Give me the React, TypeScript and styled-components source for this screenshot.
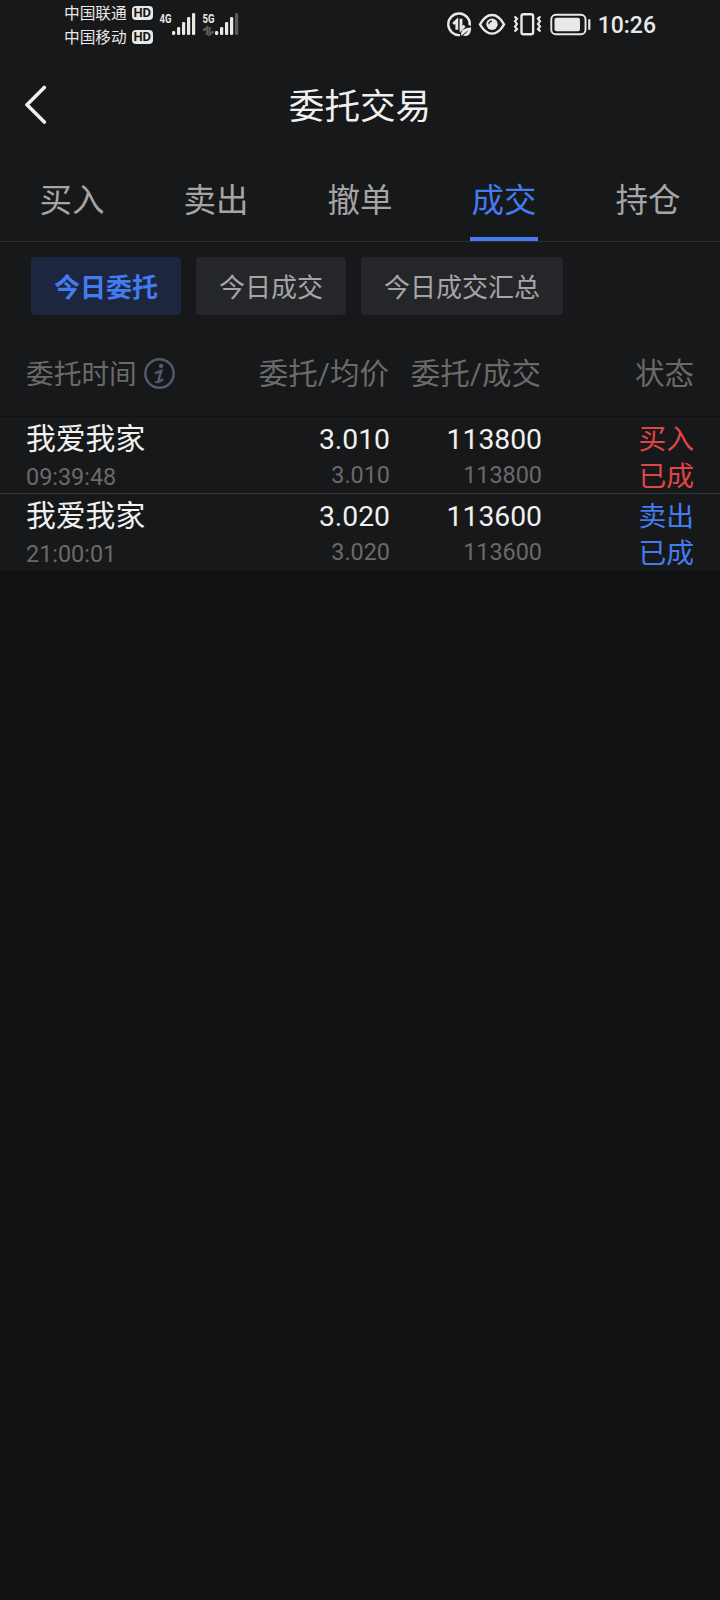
import React, { useState } from 'react';
import styled, { createGlobalStyle } from 'styled-components';

const GlobalStyle = createGlobalStyle`
  * {
    box-sizing: border-box;
  }
  body {
    margin: 0;
    background: #101113;
    font-family: Roboto, 'Noto Sans CJK SC', sans-serif;
  }
`;

const Page = styled.div`
  display: flex;
  flex-direction: column;
  width: 720px;
  min-height: 1600px;
  background: #101113;
`;

const Panel = styled.div`
  display: flex;
  flex-direction: column;
  background: #17181a;
`;

const StatusBar = styled.div`
  display: flex;
  justify-content: space-between;
  height: 50px;
  padding: 0 64px 0 64px;
  color: #e8e8e8;
`;

const StatusLeft = styled.div`
  display: flex;
`;

const StatusRight = styled.div`
  display: flex;
  align-items: center;
  height: 50px;
`;

const Carriers = styled.div`
  display: flex;
  flex-direction: column;
  padding-top: 1px;
  width: 95px;
`;

const Carrier = styled.div`
  display: flex;
  align-items: center;
  gap: 5px;
  height: 24px;
  font-size: 15.7px;
  line-height: 24px;
`;

const CarrierName = styled.span`
  padding-top: 1px;
`;

const HdBadge = styled.span`
  display: flex;
  align-items: center;
  justify-content: center;
  width: 21px;
  height: 14px;
  border-radius: 4px;
  background: #e8e8e8;
  color: #17181a;
  font-size: 13px;
  font-weight: 700;
  line-height: 14px;
`;

const Clock = styled.span`
  margin-left: 7px;
  padding-top: 1px;
  font-size: 23px;
  font-weight: 500;
  line-height: 49px;
`;

const Header = styled.div`
  display: grid;
  grid-template-columns: 80px 1fr 80px;
  align-items: center;
  height: 110px;
`;

const BackButton = styled.button`
  display: flex;
  align-items: center;
  height: 60px;
  padding: 0 0 0 22px;
  border: none;
  background: none;
  color: #f0f0f0;
`;

const Title = styled.div`
  padding-top: 4px;
  color: #f0f0f0;
  font-size: 35.6px;
  line-height: 52px;
  text-align: center;
`;

const Tabs = styled.div`
  display: grid;
  grid-template-columns: repeat(5, 144px);
  height: 82px;
  border-bottom: 1px solid #2b2c2e;
`;

const Tab = styled.button<{ $active: boolean }>`
  justify-self: center;
  width: 68px;
  height: 81px;
  padding: 4px 0 0;
  border: none;
  border-bottom: 4px solid ${({ $active }) => ($active ? '#437cf0' : 'transparent')};
  background: none;
  color: ${({ $active }) => ($active ? '#437cf0' : '#a5a5a5')};
  font-family: inherit;
  font-size: 32.5px;
  line-height: 48px;
  white-space: nowrap;
`;

const Chips = styled.div`
  display: flex;
  gap: 15px;
  height: 89px;
  padding: 15px 31px 0;
  border-bottom: 1px solid #1b1c1f;
`;

const Chip = styled.button<{ $active: boolean }>`
  height: 58px;
  padding: 3px 23px 0;
  border: none;
  border-radius: 4px;
  background: ${({ $active }) => ($active ? '#1d263f' : '#25262a')};
  color: ${({ $active }) => ($active ? '#437cf0' : '#a5a5a5')};
  font-family: inherit;
  font-size: 26px;
  font-weight: ${({ $active }) => ($active ? 700 : 400)};
  line-height: 40px;
`;

const TableHead = styled.div`
  display: grid;
  grid-template-columns: 200px 163px 152px 153px;
  align-items: center;
  height: 86px;
  padding: 0 26px;
  border-bottom: 1px solid #0f1012;
  color: #6a6a6a;
  font-size: 29.5px;
  line-height: 44px;
`;

const TimeHead = styled.div`
  display: flex;
  align-items: center;
  gap: 7px;
  font-size: 27.7px;
`;

const TimeLabel = styled.span`
  padding-top: 2px;
`;

const HeadCell = styled.div`
  padding-top: 1px;
  text-align: right;
  white-space: nowrap;
`;

const Row = styled.div`
  display: grid;
  grid-template-columns: 200px 164px 152px 152px;
  height: 76px;
  padding: 0 26px;
  & + & {
    height: 77px;
    border-top: 1px solid #343537;
  }
`;

const NameCell = styled.div`
  display: flex;
  flex-direction: column;
`;

const Name = styled.div`
  color: #f0f0f0;
  font-size: 29.8px;
  line-height: 44px;
`;

const Time = styled.div`
  color: #6a6a6a;
  font-size: 23.4px;
  line-height: 32px;
`;

const NumberCell = styled.div`
  display: flex;
  flex-direction: column;
  padding-top: 1px;
  text-align: right;
`;

const Main = styled.div`
  color: #f0f0f0;
  font-size: 28.3px;
  line-height: 44px;
`;

const Sub = styled.div`
  color: #6a6a6a;
  font-size: 23.4px;
  line-height: 26px;
`;

const StateCell = styled.div<{ $side: 'buy' | 'sell' }>`
  color: ${({ $side }) => ($side === 'buy' ? '#e04547' : '#437cf0')};
  font-size: 27.8px;
  line-height: 37px;
  padding-top: 4px;
  text-align: right;
`;

type Order = {
  name: string;
  time: string;
  price: string;
  avgPrice: string;
  amount: string;
  dealAmount: string;
  side: 'buy' | 'sell';
  state: string;
};

const tabs = ['买入', '卖出', '撤单', '成交', '持仓'];
const chips = ['今日委托', '今日成交', '今日成交汇总'];

const orders: Order[] = [
  {
    name: '我爱我家',
    time: '09:39:48',
    price: '3.010',
    avgPrice: '3.010',
    amount: '113800',
    dealAmount: '113800',
    side: 'buy',
    state: '已成',
  },
  {
    name: '我爱我家',
    time: '21:00:01',
    price: '3.020',
    avgPrice: '3.020',
    amount: '113600',
    dealAmount: '113600',
    side: 'sell',
    state: '已成',
  },
];

// bar tops, left to right, all standing on y = 35
const barTops = [31, 27, 22, 17, 13];

function Signal({ label, weak }: { label: string; weak?: boolean }) {
  return (
    <svg width={weak ? 40 : 43} height="50" fill="#e8e8e8">
      <text
        x="0.5"
        y="22.5"
        fontFamily="Roboto"
        fontSize="12.8"
        fontWeight="700"
        textLength="12"
        lengthAdjust="spacingAndGlyphs"
      >
        {label}
      </text>
      {weak && (
        <path d="M1 30.5L5 27.5V35M7.500 27V34.500L11.500 31.500" fill="none" stroke="#58595b" strokeWidth="2.2" />
      )}
      {barTops.map((top, i) => (
        <rect
          key={top}
          x={13 + i * 5}
          y={top}
          width="3.2"
          height={35 - top}
          rx="1.3"
          fill={weak && i === 4 ? '#58595b' : '#e8e8e8'}
        />
      ))}
    </svg>
  );
}

function StatusIcons() {
  return (
    <svg width="145" height="50" fill="none" stroke="#e8e8e8" strokeWidth="2.4">
      {/* data saver */}
      <path d="M23.8 25.5A10.8 10.8 0 1 0 14 35.1" />
      <path d="M7.2 24L10.8 20.600V29.800" strokeWidth="2.8" />
      <path d="M15 18.800V29.200L18.600 25.800" strokeWidth="2.8" />
      <path d="M15.500 36C14 30.500 17.500 28 25.200 27.600C25 34 22 37.500 17.500 35.500Z" fill="#e8e8e8" stroke="none" />
      <path d="M15.300 36.500L21.500 31.200" stroke="#17181a" strokeWidth="1" />
      {/* eye comfort */}
      <path d="M34 24.300C37.500 18 42 15 46 15S54.500 18 58 24.300C54.500 30.600 50 33.600 46 33.600S37.500 30.600 34 24.300Z" />
      <circle cx="46" cy="24.300" r="5.700" fill="#e8e8e8" stroke="none" />
      <path d="M42.800 24.300A3.200 3.200 0 0 1 46 21.100" stroke="#17181a" strokeWidth="1.200" />
      {/* vibrate */}
      <rect x="75.500" y="14.200" width="11.600" height="20" rx="2" />
      <path d="M68.500 16.500L71 18.700L69 21.300L71 23.900L69 26.500L71 29.100L68.500 31.500" strokeWidth="2.200" />
      <path d="M94.500 16.500L92 18.700L94 21.300L92 23.900L94 26.500L92 29.100L94.500 31.500" strokeWidth="2.200" />
      {/* battery */}
      <rect x="105.300" y="14.800" width="34.200" height="19.400" rx="4.500" strokeWidth="1.900" />
      <rect x="108.500" y="17.800" width="25.500" height="13.500" rx="2" fill="#e8e8e8" stroke="none" />
      <path d="M143.300 20V29" strokeWidth="2.200" strokeLinecap="round" />
    </svg>
  );
}

function InfoIcon() {
  return (
    <svg width="31" height="31" viewBox="0 0 31 31" fill="none" stroke="#535a6d" strokeWidth="2.4">
      <circle cx="15.500" cy="15.500" r="14.200" />
      <circle cx="17" cy="8" r="2.200" fill="#535a6d" stroke="none" />
      <path d="M11 15.200C13.500 14.300 15.500 13.300 17.400 12.800L14.600 21.500C13.800 24.300 15.500 24 19 21" />
      <path d="M10.800 24.200H15.500" strokeWidth="1.800" />
    </svg>
  );
}

function App() {
  const [tab, setTab] = useState<string>('成交');
  const [chip, setChip] = useState<string>('今日委托');

  return (
    <Page>
      <GlobalStyle />
      <Panel>
        <StatusBar>
          <StatusLeft>
            <Carriers>
              <Carrier>
                <CarrierName>中国联通</CarrierName>
                <HdBadge>HD</HdBadge>
              </Carrier>
              <Carrier>
                <CarrierName>中国移动</CarrierName>
                <HdBadge>HD</HdBadge>
              </Carrier>
            </Carriers>
            <Signal label="4G" />
            <Signal label="5G" weak />
          </StatusLeft>
          <StatusRight>
            <StatusIcons />
            <Clock>10:26</Clock>
          </StatusRight>
        </StatusBar>
        <Header>
          <BackButton>
            <svg width="26" height="40" fill="none" stroke="currentColor" strokeWidth="3.6">
              <path d="M22.300 2.500L5 19.800L22.300 37" strokeLinecap="round" strokeLinejoin="round" />
            </svg>
          </BackButton>
          <Title>委托交易</Title>
        </Header>
        <Tabs>
          {tabs.map((item) => (
            <Tab key={item} $active={item === tab} onClick={() => setTab(item)}>
              {item}
            </Tab>
          ))}
        </Tabs>
        <Chips>
          {chips.map((item) => (
            <Chip key={item} $active={item === chip} onClick={() => setChip(item)}>
              {item}
            </Chip>
          ))}
        </Chips>
        <TableHead>
          <TimeHead>
            <TimeLabel>委托时间</TimeLabel>
            <InfoIcon />
          </TimeHead>
          <HeadCell>委托/均价</HeadCell>
          <HeadCell>委托/成交</HeadCell>
          <HeadCell>状态</HeadCell>
        </TableHead>
        {orders.map((order) => (
          <Row key={order.time}>
            <NameCell>
              <Name>{order.name}</Name>
              <Time>{order.time}</Time>
            </NameCell>
            <NumberCell>
              <Main>{order.price}</Main>
              <Sub>{order.avgPrice}</Sub>
            </NumberCell>
            <NumberCell>
              <Main>{order.amount}</Main>
              <Sub>{order.dealAmount}</Sub>
            </NumberCell>
            <StateCell $side={order.side}>
              <div>{order.side === 'buy' ? '买入' : '卖出'}</div>
              <div>{order.state}</div>
            </StateCell>
          </Row>
        ))}
      </Panel>
    </Page>
  );
}

export default App;
